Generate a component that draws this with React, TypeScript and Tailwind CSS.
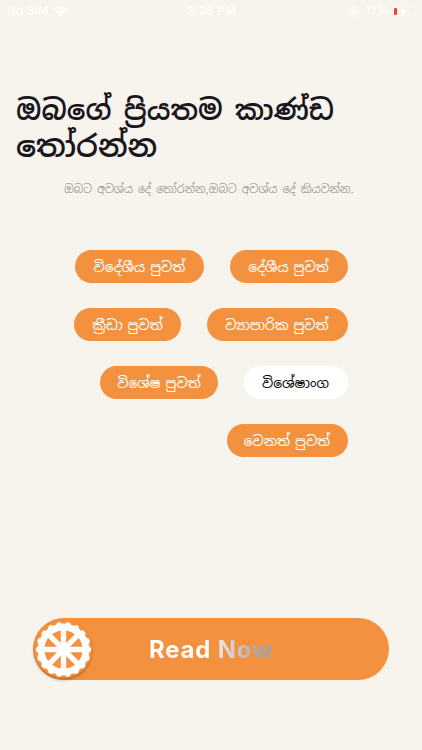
import { Zap } from 'lucide-react';

const categories = [
  [
    { label: 'දේශීය පුවත්', width: 'w-[118px]' },
    { label: 'විදේශීය පුවත්', width: 'w-[129px]' },
  ],
  [
    { label: 'ව්‍යාපාරික පුවත්', width: 'w-[141px]' },
    { label: 'ක්‍රීඩා පුවත්', width: 'w-[107px]' },
  ],
  [
    { label: 'විශේෂාංග', width: 'w-[104px]', selected: true },
    { label: 'විශේෂ පුවත්', width: 'w-[118px]' },
  ],
  [{ label: 'වෙනත් පුවත්', width: 'w-[121px]' }],
];

function WheelIcon() {
  return (
    <svg width="58" height="58" viewBox="0 0 58 58" fill="none">
      <circle cx="29.5" cy="29.5" r="22.5" stroke="white" strokeWidth="6.8" />
      {Array.from({ length: 18 }, (_, i) => (
        <circle key={i} cx="29.5" cy="4.6" r="2.8" fill="white" transform={`rotate(${i * 20 + 10} 29.5 29.5)`} />
      ))}
      {Array.from({ length: 4 }, (_, i) => (
        <path key={i} d="M29.5 7.5v44" stroke="white" strokeWidth="5.4" transform={`rotate(${i * 45} 29.5 29.5)`} />
      ))}
    </svg>
  );
}

export default function App() {
  return (
    <div className="flex h-[750px] w-[422px] flex-col overflow-hidden bg-[#F7F4ED] font-['Inter','Noto_Sans_Sinhala','Noto_Sans',sans-serif] text-[#1A171C]">
      {/* Status bar */}
      <header className="grid h-[22px] shrink-0 grid-cols-3 items-center pl-[7px] pr-[6px] text-[12px] text-white">
        <div className="flex items-center gap-[5px]">
          <span>No SIM</span>
          <svg width="15" height="11" viewBox="0 0 15 11" fill="none" stroke="white" strokeWidth="2.4">
            <path d="M1 4.2a9.2 9.2 0 0 1 13 0" />
            <path d="M3.4 6.9a5.8 5.8 0 0 1 8.2 0" />
            <path d="M7.5 10.8 5.2 8.5a3.2 3.2 0 0 1 4.6 0z" fill="white" stroke="none" />
          </svg>
        </div>
        <span className="pt-px text-center text-[11.5px] font-semibold tracking-[0.4px]">3:38 PM</span>
        <div className="flex items-center justify-end">
          <svg width="11" height="11" viewBox="0 0 11 11" fill="none" stroke="white" className="mr-[6px]">
            <circle cx="5.5" cy="5.5" r="4.7" />
            <path d="M4.2 5V4a1.3 1.3 0 0 1 2.6 0v1" />
            <path d="M3.7 5h3.6v2.5H3.7z" fill="white" />
          </svg>
          <span>17%</span>
          <div className="ml-1 flex h-[10px] w-[23px] items-center rounded-[3px] border border-white/30">
            <span className="h-[7px] w-[3px] shrink-0 rounded-[1px] bg-[#EF4040]" />
            <Zap className="ml-px h-[10px] w-[10px] fill-white" />
          </div>
        </div>
      </header>

      <h1 className="mt-[69px] h-[74px] shrink-0 whitespace-nowrap pl-4 text-[28.4px] font-semibold leading-[37px] [word-spacing:5px]">
        ඔබගේ ප්‍රියතම කාණ්ඩ
        <br />
        <span className="text-[30.5px] leading-[36px]">තෝරන්න</span>
      </h1>
      <p className="mt-[14px] h-5 shrink-0 whitespace-nowrap pr-1 text-center text-[11.3px] font-light leading-5 text-[#85827E] [word-spacing:2px]">
        ඔබට අවශ්ය දේ තෝරන්න,ඔබට අවශ්ය දේ කියවන්න.
      </p>

      {/* Category pills */}
      <div className="mt-[51px] flex flex-col gap-[25px] pr-[74.5px]">
        {categories.map((row, i) => (
          <div key={i} className="flex flex-row-reverse gap-[25.5px]">
            {row.map((item) => (
              <button
                key={item.label}
                className={`h-[33px] whitespace-nowrap rounded-full pt-[2px] text-[13.8px] [word-spacing:1px] ${item.width} ${
                  item.selected ? 'bg-white text-black' : 'bg-[#F3913E] text-white'
                }`}
              >
                {item.label}
              </button>
            ))}
          </div>
        ))}
      </div>

      {/* Slide to read */}
      <div className="mx-[33px] mb-[70px] mt-auto flex h-[62px] shrink-0 items-center rounded-full bg-[#F3913E] pl-[1px]">
        <div className="h-[58px] w-[58px] shrink-0 rounded-full bg-[#F3913E] shadow-[0_2px_3px_rgba(90,50,20,0.4)]">
          <WheelIcon />
        </div>
        <span className="ml-[57px] mt-[2px] bg-gradient-to-r from-white from-45% to-[#A3A3A3] to-90% bg-clip-text text-[24px] font-bold tracking-[0.8px] text-transparent">
          Read Now
        </span>
      </div>
    </div>
  );
}
